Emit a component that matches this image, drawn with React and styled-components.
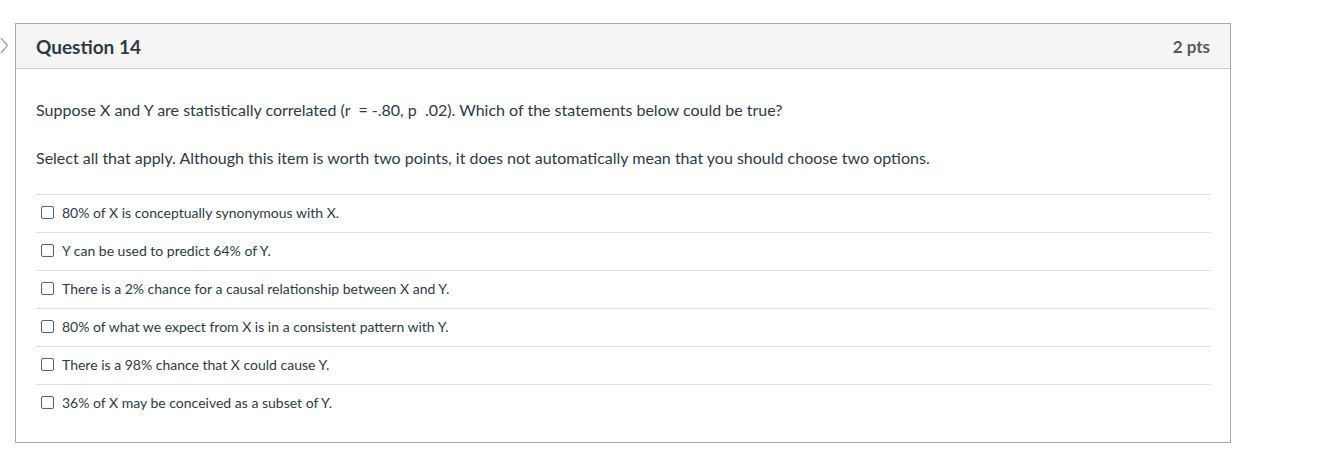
import React from 'react'
import styled, { createGlobalStyle } from 'styled-components'

const GlobalStyle = createGlobalStyle`
  html, body {
    margin: 0;
    padding: 0;
    background: #fff;
    font-family: Lato, "Liberation Sans", sans-serif;
    color: #2d3b45;
  }
`

const Page = styled.div`
  position: relative;
  width: 1334px;
  height: 460px;
  padding: 23px 0 0 15px;
  box-sizing: border-box;
`

const Chevron = styled.svg`
  position: absolute;
  left: 0;
  top: 37px;
`

const Card = styled.div`
  width: 1216px;
  border: 1px solid #aaaaaa;
  box-sizing: border-box;
`

const Header = styled.div`
  display: flex;
  align-items: center;
  justify-content: space-between;
  height: 44px;
  padding: 0 20px;
  background: #f5f5f5;
  border-bottom: 1px solid #c7cdd1;
`

const Title = styled.div`
  font-size: 19px;
  font-weight: 700;
  color: #2d3b45;
`

const Points = styled.div`
  font-size: 17px;
  font-weight: 700;
  color: #555a5e;
`

const Body = styled.div`
  padding: 31px 19px 20px 20px;
`

const Text = styled.p`
  margin: 0 0 28px;
  font-size: 16px;
  line-height: 20px;
  color: #2d3b45;
`

const Answers = styled.div`
  margin-top: -2px;
`

const Answer = styled.label`
  display: flex;
  align-items: center;
  gap: 8px;
  height: 37px;
  padding: 0 0 3px 5px;
  box-sizing: content-box;
  height: 34px;
  border-top: 1px solid #dde1e3;
  font-size: 14px;
  color: #2d3b45;
`

const Box = styled.span`
  width: 11px;
  height: 11px;
  margin-top: 1px;
  border: 1px solid #5a6268;
  border-radius: 2px;
  background: #fff;
`

const answers = [
  '80% of X is conceptually synonymous with X.',
  'Y can be used to predict 64% of Y.',
  'There is a 2% chance for a causal relationship between X and Y.',
  '80% of what we expect from X is in a consistent pattern with Y.',
  'There is a 98% chance that X could cause Y.',
  '36% of X may be conceived as a subset of Y.',
]

const App = () => {
  return (
    <Page>
      <GlobalStyle />
      <Chevron width="9" height="17" viewBox="0 0 9 17">
        <path d="M1 1 L7.5 8.5 L1 16" fill="none" stroke="#8aa6c4" strokeWidth="1.2" />
      </Chevron>
      <Card>
        <Header>
          <Title>Question 14</Title>
          <Points>2 pts</Points>
        </Header>
        <Body>
          <Text>Suppose X and Y are statistically correlated (r &nbsp;= -.80, p &nbsp;.02). Which of the statements below could be true?</Text>
          <Text>Select all that apply. Although this item is worth two points, it does not automatically mean that you should choose two options.</Text>
          <Answers>
            {answers.map((a) => (
              <Answer key={a}>
                <Box />
                {a}
              </Answer>
            ))}
          </Answers>
        </Body>
      </Card>
    </Page>
  )
}

export default App
